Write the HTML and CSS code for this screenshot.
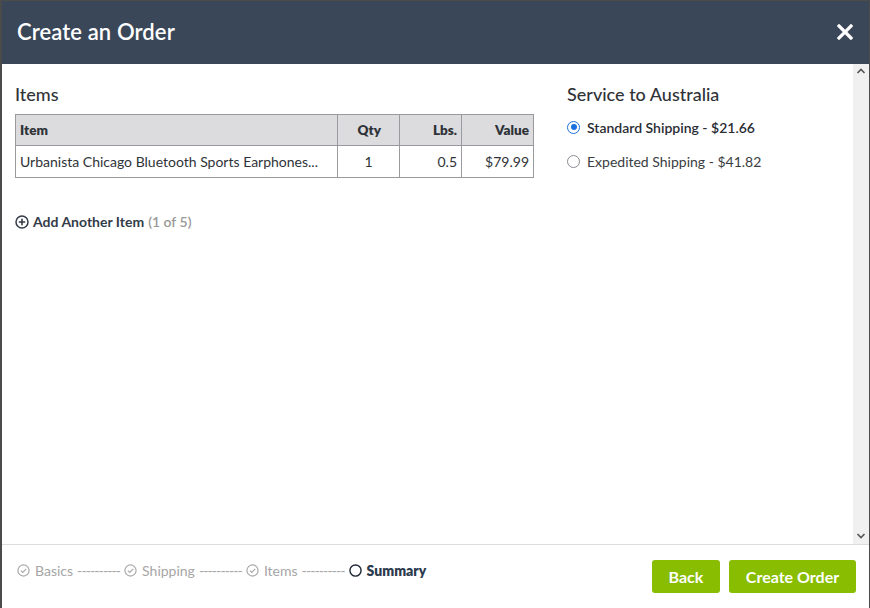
FILE: index.html
```html
<!DOCTYPE html>
<html>
<head>
<meta charset="utf-8">
<link rel="stylesheet" href="styles.css">
</head>
<body>
<div class="modal">
  <header class="modal-head">
    <h1 class="title">Create an Order</h1>
    <svg class="close" width="16" height="16" viewBox="0 0 16 16"><path d="M2 2 L14 14 M14 2 L2 14" stroke="#fff" stroke-width="3.2" stroke-linecap="square"/></svg>
  </header>
  <div class="modal-body">
    <div class="content">
      <section class="items">
        <h2 class="heading">Items</h2>
        <table class="tbl">
          <colgroup><col class="w-item"><col class="w-qty"><col class="w-lbs"><col class="w-val"></colgroup>
          <thead>
            <tr><th class="c-item">Item</th><th class="c-qty">Qty</th><th class="c-lbs">Lbs.</th><th class="c-val">Value</th></tr>
          </thead>
          <tbody>
            <tr><td class="c-item">Urbanista Chicago Bluetooth Sports Earphones...</td><td class="c-qty">1</td><td class="c-lbs">0.5</td><td class="c-val">$79.99</td></tr>
          </tbody>
        </table>
        <div class="add">
          <svg width="14" height="14" viewBox="0 0 14 14"><circle cx="7" cy="7" r="6" fill="none" stroke="#333c48" stroke-width="1.5"/><path d="M7 3.8V10.2M3.8 7H10.2" stroke="#333c48" stroke-width="1.6"/></svg>
          <span class="add-text">Add Another Item</span> <span class="add-count">(1 of 5)</span>
        </div>
      </section>
      <section class="service">
        <h2 class="heading">Service to Australia</h2>
        <label class="opt sel"><span class="radio on"></span>Standard Shipping - $21.66</label>
        <label class="opt"><span class="radio"></span>Expedited Shipping - $41.82</label>
      </section>
    </div>
    <div class="scrollbar">
      <svg width="10" height="8" viewBox="0 0 10 8"><path d="M1.5 6 L5 2.5 L8.5 6" fill="none" stroke="#555" stroke-width="1.6"/></svg>
      <svg width="10" height="8" viewBox="0 0 10 8"><path d="M1.5 2 L5 5.5 L8.5 2" fill="none" stroke="#555" stroke-width="1.6"/></svg>
    </div>
  </div>
  <footer class="modal-foot">
    <div class="steps">
      <span class="step done"><svg width="13" height="13" viewBox="0 0 14 14"><circle cx="7" cy="7" r="6" fill="none" stroke="#aaa" stroke-width="1.3"/><path d="M4.2 7.2 L6.2 9.1 L9.9 5.2" fill="none" stroke="#aaa" stroke-width="1.3"/></svg>Basics</span>
      <span class="dash">----------</span>
      <span class="step done"><svg width="13" height="13" viewBox="0 0 14 14"><circle cx="7" cy="7" r="6" fill="none" stroke="#aaa" stroke-width="1.3"/><path d="M4.2 7.2 L6.2 9.1 L9.9 5.2" fill="none" stroke="#aaa" stroke-width="1.3"/></svg>Shipping</span>
      <span class="dash">----------</span>
      <span class="step done"><svg width="13" height="13" viewBox="0 0 14 14"><circle cx="7" cy="7" r="6" fill="none" stroke="#aaa" stroke-width="1.3"/><path d="M4.2 7.2 L6.2 9.1 L9.9 5.2" fill="none" stroke="#aaa" stroke-width="1.3"/></svg>Items</span>
      <span class="dash">----------</span>
      <span class="step cur"><svg width="13" height="13" viewBox="0 0 14 14"><circle cx="7" cy="7" r="6" fill="none" stroke="#1f2733" stroke-width="1.5"/></svg>Summary</span>
    </div>
    <div class="buttons">
      <button class="btn back">Back</button>
      <button class="btn create">Create Order</button>
    </div>
  </footer>
</div>
</body>
</html>
```
FILE: styles.css
```css
html, body { margin: 0; padding: 0; }
body {
  background: #4b4b4b;
  font-family: "Lato", "Open Sans", sans-serif;
  height: 608px;
  overflow: hidden;
}
.modal {
  margin: 1px 1px 0 2px;
  background: #fff;
  height: 607px;
  display: flex;
  flex-direction: column;
  overflow: hidden;
}
.modal-head {
  height: 63px;
  background: #3a4759;
  display: flex;
  align-items: center;
  justify-content: space-between;
  padding: 0 16px 0 15px;
  flex: none;
}
.title {
  margin: 0;
  color: #fff;
  font-size: 22px;
  font-weight: 600;
  letter-spacing: 0.1px;
  margin-top: -3px;
}
.close { display: block; margin-top: -2px; }
.modal-body {
  height: 480px;
  display: flex;
  flex: none;
}
.content {
  flex: 1;
  display: flex;
  padding: 19px 0 0 13px;
}
.items { width: 518px; }
.service { margin-left: 34px; }
.heading {
  margin: 0 0 8px;
  font-size: 18px;
  font-weight: 500;
  color: #2f3338;
  line-height: 23px;
}
.service .heading { margin-bottom: 11px; }
.tbl {
  border-collapse: collapse;
  table-layout: fixed;
  width: 518px;
  font-size: 14px;
  color: #2f3338;
}
.w-item { width: 322px; }
.w-qty { width: 62px; }
.w-lbs { width: 62px; }
.w-val { width: 72px; }
.tbl th, .tbl td {
  border: 1px solid #9a9a9e;
  padding: 0 4px;
  white-space: nowrap;
  overflow: hidden;
}
.tbl th {
  background: #dcdcdf;
  height: 30px;
  font-weight: 800;
  font-size: 13.5px;
  text-align: right;
}
.tbl td { height: 31px; }
.tbl .c-item { text-align: left; }
.tbl .c-qty { text-align: center; }
.tbl .c-lbs { text-align: right; }
.tbl .c-val { text-align: right; }
.tbl th.c-qty { text-align: right; padding-right: 18px; }
.add {
  margin-top: 35px;
  display: flex;
  align-items: center;
  font-size: 14px;
}
.add svg { margin-right: 4px; }
.add-text { font-weight: 700; color: #333c48; }
.add-count { color: #999; margin-left: 4px; font-weight: 600; }
.opt {
  display: flex;
  align-items: center;
  font-size: 14px;
  color: #3a3d42;
  height: 20px;
  margin-bottom: 14px;
}
.opt.sel { font-weight: 600; color: #2a2d33; }
.radio {
  width: 11px;
  height: 11px;
  border: 1.5px solid #8a8a92;
  border-radius: 50%;
  margin-right: 7px;
  box-sizing: content-box;
  position: relative;
}
.radio.on { border-color: #1a6fe0; }
.radio.on::after {
  content: "";
  position: absolute;
  left: 2.5px; top: 2.5px;
  width: 6px; height: 6px;
  border-radius: 50%;
  background: #1a6fe0;
}
.scrollbar {
  width: 16px;
  background: #f0f0f0;
  display: flex;
  flex-direction: column;
  justify-content: space-between;
  align-items: center;
  padding: 3px 0 4px;
  box-sizing: border-box;
  flex: none;
}
.scrollbar svg { display: block; }
.modal-foot {
  border-top: 1px solid #dcdcdc;
  display: flex;
  justify-content: space-between;
  padding: 15px 13px 0 15px;
  height: 60px;
}
.steps {
  display: flex;
  align-items: center;
  height: 24px;
  font-size: 14px;
  color: #a6a6a6;
  margin-top: -2px;
}
.step { display: flex; align-items: center; }
.step svg { margin-right: 5px; }
.dash { margin: 0 4px; letter-spacing: -0.9px; }
.step.cur { color: #2c3a4d; font-weight: 800; }
.buttons { display: flex; gap: 9px; }
.btn {
  background: #88bd02;
  border: none;
  border-radius: 3px;
  color: #fff;
  font-family: "Lato", "Open Sans", sans-serif;
  font-weight: 700;
  font-size: 16px;
  height: 33px;
  padding: 0;
  cursor: pointer;
}
.btn.back { width: 68px; }
.btn.create { width: 127px; }
```
